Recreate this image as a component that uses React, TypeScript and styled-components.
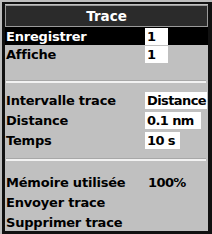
import React from "react";
import styled, { createGlobalStyle } from "styled-components";

const Global = createGlobalStyle`
  html, body { margin: 0; padding: 0; background: #bdbdbd; }
  body { font-family: "DejaVu Sans", Verdana, sans-serif; }
`;

const Frame = styled.div`
  box-sizing: border-box;
  width: 210px;
  height: 232px;
  margin: 2px 0 0 2px;
  background: #c0c0c0;
  border: 3px solid #111;
  border-top-width: 2px;
  border-right-width: 4px;
  display: flex;
  flex-direction: column;
`;

const Header = styled.div`
  box-sizing: border-box;
  height: 25px;
  margin: 1px 0 0 0;
  background: #2b2b2b;
  border: 1px solid #9a9a9a;
  color: #fff;
  font-weight: bold;
  font-size: 13.5px;
  display: flex;
  align-items: center;
  justify-content: center;
`;

const Row = styled.div<{ $active?: boolean }>`
  box-sizing: border-box;
  height: 18px;
  display: grid;
  grid-template-columns: 139px 1fr;
  align-items: center;
  padding-left: 1px;
  background: ${(p) => (p.$active ? "#000" : "transparent")};
  color: ${(p) => (p.$active ? "#fff" : "#000")};
  font-weight: bold;
  font-size: 13px;
  letter-spacing: -0.2px;
  white-space: nowrap;
`;

const Value = styled.div<{ $w: number; $box?: boolean }>`
  box-sizing: border-box;
  width: ${(p) => p.$w}px;
  height: 17px;
  background: ${(p) => (p.$box ? "#fff" : "transparent")};
  color: #000;
  padding-left: ${(p) => (p.$box ? 2 : 3)}px;
  display: flex;
  align-items: center;
  font-weight: bold;
  letter-spacing: -0.6px;
  overflow: hidden;
`;

const Group = styled.div<{ $gap: number; $pt: number }>`
  display: flex;
  flex-direction: column;
  gap: ${(p) => p.$gap}px;
  padding-top: ${(p) => p.$pt}px;
`;

const Separator = styled.div<{ $mt: number }>`
  margin: ${(p) => p.$mt}px 2px 0 1px;
  height: 2px;
  background: #f2f2f2;
  border-top: 1px solid #a8a8a8;
`;

export default function App() {
  return (
    <>
      <Global />
      <Frame>
        <Header>Trace</Header>
        <Group $gap={0} $pt={0}>
          <Row $active>
            <span>Enregistrer</span>
            <Value $w={23} $box>1</Value>
          </Row>
          <Row>
            <span>Affiche</span>
            <Value $w={23} $box>1</Value>
          </Row>
        </Group>
        <Separator $mt={17} />
        <Group $gap={2} $pt={8}>
          <Row>
            <span>Intervalle trace</span>
            <Value $w={62} $box>Distance</Value>
          </Row>
          <Row>
            <span>Distance</span>
            <Value $w={56} $box>0.1 nm</Value>
          </Row>
          <Row>
            <span>Temps</span>
            <Value $w={35} $box>10 s</Value>
          </Row>
        </Group>
        <Separator $mt={9} />
        <Group $gap={2} $pt={12}>
          <Row>
            <span>Mémoire utilisée</span>
            <Value $w={50}>100%</Value>
          </Row>
          <Row>
            <span>Envoyer trace</span>
          </Row>
          <Row>
            <span>Supprimer trace</span>
          </Row>
        </Group>
      </Frame>
    </>
  );
}
